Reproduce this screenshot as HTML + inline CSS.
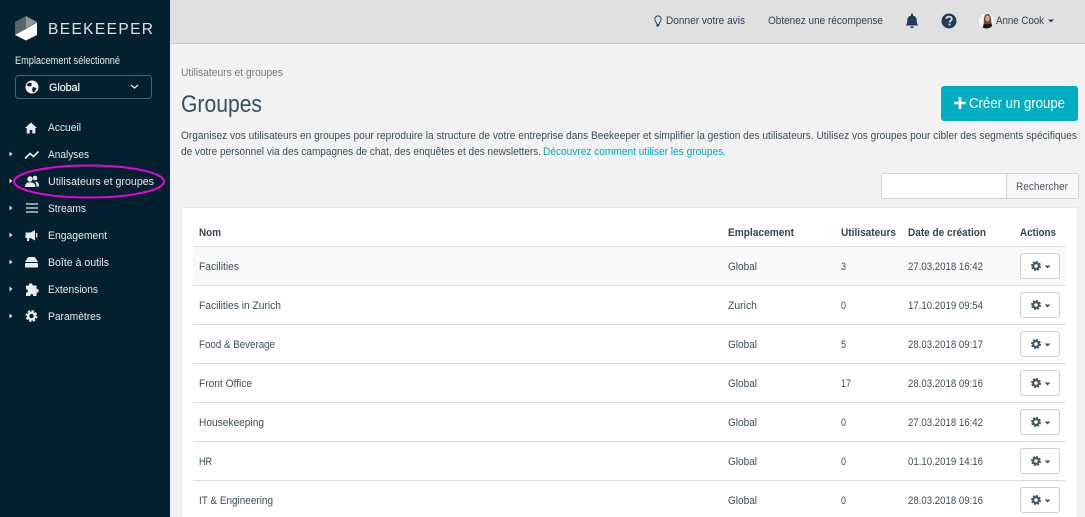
<!DOCTYPE html>
<html lang="fr"><head><meta charset="utf-8"><title>Groupes</title>
<style>
html,body{margin:0;padding:0;width:1085px;height:517px;overflow:hidden;background:#f2f2f2}
svg{display:block}
text{font-family:"Liberation Sans",sans-serif;font-size:11.2px;fill:#3c4f59;white-space:pre}
.s text{fill:#e8ecee}
.t text{fill:#2b4257}
.h text{font-weight:bold;fill:#34464f;font-size:11px}
</style></head><body>
<svg width="1085" height="517" viewBox="0 0 1085 517" xmlns="http://www.w3.org/2000/svg">
<defs>
<symbol id="gear" viewBox="0 0 14 14" overflow="visible">
<circle cx="7" cy="7" r="3.600" fill="none" stroke="currentColor" stroke-width="2.600"/>
<circle cx="7" cy="7" r="5.400" fill="none" stroke="currentColor" stroke-width="2" stroke-dasharray="2.600 1.640"/>
</symbol>
</defs>
<rect x="0" y="0" width="1085" height="517" fill="#f2f2f2"/>

<!-- top bar -->
<rect x="170" y="0" width="915" height="43" fill="#e0e0e0"/>
<rect x="170" y="43" width="915" height="1" fill="#cbcbcb"/>
<g class="t">
<path d="M657 24.500c0-2-2.200-3-2.200-5.400a3.200 3.200 0 0 1 6.400 0c0 2.400-2.200 3.400-2.200 5.400z" fill="none" stroke="#2b4257" stroke-width="1"/>
<rect x="656.500" y="25" width="2.500" height="1.500" fill="#2b4257"/>
<text x="666" y="24" textLength="79" lengthAdjust="spacingAndGlyphs">Donner votre avis</text>
<text x="768" y="24" textLength="115" lengthAdjust="spacingAndGlyphs">Obtenez une récompense</text>
<path d="M905.500 25.500c1.400-1.300 1.700-2.600 1.700-5 0-2.700 1.700-4.500 3.800-4.900v-1.100a1 1 0 0 1 2 0v1.100c2.100.4 3.800 2.200 3.800 4.900 0 2.400.3 3.700 1.700 5z" fill="#1f3b59"/>
<path d="M910.300 26.500h3.400a1.700 1.700 0 0 1-3.400 0z" fill="#1f3b59"/>
<circle cx="949" cy="21" r="7.500" fill="#1f3b59"/>
<path d="M946.300 18.800c.3-1.500 1.400-2.200 2.800-2.200 1.600 0 2.700 1 2.700 2.300 0 2-2.300 1.900-2.300 3.500" fill="none" stroke="#e0e0e0" stroke-width="1.800"/>
<rect x="948.500" y="23.600" width="1.900" height="1.900" fill="#e0e0e0"/>
<clipPath id="av"><circle cx="986.500" cy="21" r="7.500"/></clipPath>
<g clip-path="url(#av)">
<rect x="979" y="13" width="16" height="16" fill="#fbf9f7"/>
<path d="M982 29c1.500-3 1.800-5 1.800-9 0-3.500 1.500-6 3.700-6 2.300 0 3.500 2.500 3.700 6 .1 3 .8 6 3.800 9z" fill="#6a4a35"/>
<ellipse cx="987.500" cy="18.500" rx="2.200" ry="3" fill="#d9a98c"/>
<path d="M982 29l2-5h7l3 5z" fill="#1c1a1b"/>
</g>
<text x="996" y="24" textLength="48" lengthAdjust="spacingAndGlyphs">Anne Cook</text>
<path d="M1048 19.500h6l-3 3z" fill="#2b4257"/>
</g>

<!-- sidebar -->
<rect x="0" y="0" width="170" height="517" fill="#03202f"/>
<path d="M15 22l11-6v12.500l-11 6.500z" fill="#59656b"/>
<path d="M26 16l11 6-11 6.500z" fill="#8f9699"/>
<path d="M37 22.500v12.500l-11 5.500-11-5.500z" fill="#fdfdfd"/>
<g class="s">
<text x="48" y="34" style="font-size:15.500px;fill:#dfe3e5" textLength="105" lengthAdjust="spacing">BEEKEEPER</text>
<text x="15" y="64" textLength="105" lengthAdjust="spacingAndGlyphs">Emplacement sélectionné</text>
<rect x="15.500" y="75.500" width="136" height="23" rx="3" fill="none" stroke="#4b6170"/>
<circle cx="32" cy="87" r="6.500" fill="#f2f4f5"/>
<path d="M29 82.500l3 1-1 2.500-2.500.5-2-1.500zM33 87l3.500 1-1.500 3.500-2 1-1-3z" fill="#03202f"/>
<text x="49" y="91" style="stroke:#e8ecee;stroke-width:.25px" textLength="31" lengthAdjust="spacingAndGlyphs">Global</text>
<path d="M131 85l3.500 3 3.500-3" fill="none" stroke="#e8ecee" stroke-width="1.300"/>

<path d="M25 128l6-5.500 6 5.500h-1.700v5.500h-3v-3.500h-2.600v3.500h-3V128z" fill="#e8ecee"/>
<text x="48" y="131" textLength="33" lengthAdjust="spacingAndGlyphs">Accueil</text>
<path d="M9.500 151.500l3 2.500-3 2.500z" fill="#d8dcdf"/>
<path d="M25 158.500l5-5 3.500 3 5-5" fill="none" stroke="#e8ecee" stroke-width="1.600"/>
<text x="48" y="158" textLength="41" lengthAdjust="spacingAndGlyphs">Analyses</text>
<path d="M9.500 178.500l3 2.500-3 2.500z" fill="#d8dcdf"/>
<circle cx="35" cy="178" r="2.300" fill="#e8ecee"/>
<path d="M36 181.500c2 .3 3 2 3 5h-2.500c0-2-.5-3.700-1.500-4.500z" fill="#e8ecee"/>
<circle cx="30" cy="179" r="3" stroke="#03202f" stroke-width=".6" fill="#e8ecee"/>
<path d="M25 187c0-3.300 1.800-4.800 5-4.800s5.500 1.500 5.500 4.800z" fill="#e8ecee"/>
<text x="48" y="185" textLength="106" lengthAdjust="spacingAndGlyphs">Utilisateurs et groupes</text>
<path d="M9.500 205.500l3 2.500-3 2.500z" fill="#d8dcdf"/>
<path d="M26 204h12M26 208h12M26 212h12" stroke="#e8ecee" stroke-width="1.300"/>
<text x="48" y="212" textLength="38" lengthAdjust="spacingAndGlyphs">Streams</text>
<path d="M9.500 232.500l3 2.500-3 2.500z" fill="#d8dcdf"/>
<path d="M25.500 232.500h5l4.500-2.500v10.500l-4.500-2.500h-1l-.5 3h-2l.1-3h-1.600z" fill="#e8ecee"/><rect x="36" y="233" width="1.300" height="4.500" fill="#e8ecee"/>
<text x="48" y="239" textLength="59" lengthAdjust="spacingAndGlyphs">Engagement</text>
<path d="M9.500 259.500l3 2.500-3 2.500z" fill="#d8dcdf"/>
<path d="M25 262l2.500-4a2 2 0 0 1 1.700-1h4.600a2 2 0 0 1 1.700 1l2.500 4z" fill="#e8ecee"/><rect x="25" y="263" width="13" height="4.500" rx=".8" fill="#e8ecee"/>
<text x="48" y="266" textLength="61" lengthAdjust="spacingAndGlyphs">Boîte à outils</text>
<path d="M9.500 286.500l3 2.500-3 2.500z" fill="#d8dcdf"/>
<path d="M26 285.500h3c-1-3 4.500-3 3.500 0h4v3.500c3-1 3 4.500 0 3.500v3.500h-3.500c1-2.500-3.500-2.500-2.500 0H26v-3.500c2.500 1 2.500-4 0-3z" fill="#e8ecee"/>
<text x="48" y="293" textLength="50" lengthAdjust="spacingAndGlyphs">Extensions</text>
<path d="M9.500 313.500l3 2.500-3 2.500z" fill="#d8dcdf"/>
<use href="#gear" x="25" y="309.500" width="13" height="13" style="color:#e8ecee"/>
<text x="48" y="320" textLength="53" lengthAdjust="spacingAndGlyphs">Paramètres</text>
</g>
<ellipse cx="89" cy="181.500" rx="75" ry="16" fill="none" stroke="#ee00dc" stroke-width="2"/>

<!-- heading -->
<text x="181" y="76" style="fill:#7a7a7a" textLength="102" lengthAdjust="spacingAndGlyphs">Utilisateurs et groupes</text>
<text x="181" y="112" style="font-size:24px;fill:#34505f" textLength="81" lengthAdjust="spacingAndGlyphs">Groupes</text>
<text x="181" y="139" textLength="896" lengthAdjust="spacingAndGlyphs">Organisez vos utilisateurs en groupes pour reproduire la structure de votre entreprise dans Beekeeper et simplifier la gestion des utilisateurs. Utilisez vos groupes pour cibler des segments spécifiques</text>
<text x="181" y="155" textLength="360" lengthAdjust="spacingAndGlyphs">de votre personnel via des campagnes de chat, des enquêtes et des newsletters.</text>
<text x="543" y="155" style="fill:#00a8bf" textLength="183" lengthAdjust="spacingAndGlyphs">Découvrez comment utiliser les groupes.</text>

<rect x="941" y="86" width="137" height="35" rx="3" fill="#00aec4"/>
<path d="M954 103h12M960 97v12" stroke="#fff" stroke-width="2.600"/>
<text x="969" y="108" style="font-size:14.500px;fill:#fff" textLength="96" lengthAdjust="spacingAndGlyphs">Créer un groupe</text>

<!-- search -->
<rect x="881.500" y="173.500" width="197" height="25" rx="2" fill="#fff" stroke="#d2d2d2"/>
<rect x="1007" y="174" width="71" height="24" rx="1.500" fill="#f8f8f8"/>
<path d="M1006.500 174v24" stroke="#d2d2d2"/>
<text x="1016" y="190" style="fill:#4a5a63" textLength="52" lengthAdjust="spacingAndGlyphs">Rechercher</text>

<!-- panel -->
<rect x="181.500" y="207.500" width="896" height="330" fill="#fff" stroke="#e8e8e8"/>
<rect x="193" y="247" width="873" height="38" fill="#f9f9f9"/>
<path d="M193 246.500h873M193 285.500h873M193 324.500h873M193 363.500h873M193 402.500h873M193 441.500h873M193 480.500h873" stroke="#dedede"/>
<g class="h">
<text x="199" y="236" textLength="22" lengthAdjust="spacingAndGlyphs">Nom</text>
<text x="728" y="236" textLength="66" lengthAdjust="spacingAndGlyphs">Emplacement</text>
<text x="841" y="236" textLength="55" lengthAdjust="spacingAndGlyphs">Utilisateurs</text>
<text x="908" y="236" textLength="78" lengthAdjust="spacingAndGlyphs">Date de création</text>
<text x="1020" y="236" textLength="36" lengthAdjust="spacingAndGlyphs">Actions</text>
</g>

<text x="199" y="270" textLength="40" lengthAdjust="spacingAndGlyphs">Facilities</text>
<text x="728" y="270" textLength="29" lengthAdjust="spacingAndGlyphs">Global</text>
<text x="841" y="270" textLength="5" lengthAdjust="spacingAndGlyphs">3</text>
<text x="908" y="270" textLength="75" lengthAdjust="spacingAndGlyphs">27.03.2018 16:42</text>

<text x="199" y="309" textLength="82" lengthAdjust="spacingAndGlyphs">Facilities in Zurich</text>
<text x="728" y="309" textLength="29" lengthAdjust="spacingAndGlyphs">Zurich</text>
<text x="841" y="309" textLength="5" lengthAdjust="spacingAndGlyphs">0</text>
<text x="908" y="309" textLength="75" lengthAdjust="spacingAndGlyphs">17.10.2019 09:54</text>

<text x="199" y="348" textLength="76" lengthAdjust="spacingAndGlyphs">Food &amp; Beverage</text>
<text x="728" y="348" textLength="29" lengthAdjust="spacingAndGlyphs">Global</text>
<text x="841" y="348" textLength="5" lengthAdjust="spacingAndGlyphs">5</text>
<text x="908" y="348" textLength="75" lengthAdjust="spacingAndGlyphs">28.03.2018 09:17</text>

<text x="199" y="387" textLength="53" lengthAdjust="spacingAndGlyphs">Front Office</text>
<text x="728" y="387" textLength="29" lengthAdjust="spacingAndGlyphs">Global</text>
<text x="841" y="387" textLength="10" lengthAdjust="spacingAndGlyphs">17</text>
<text x="908" y="387" textLength="75" lengthAdjust="spacingAndGlyphs">28.03.2018 09:16</text>

<text x="199" y="426" textLength="65" lengthAdjust="spacingAndGlyphs">Housekeeping</text>
<text x="728" y="426" textLength="29" lengthAdjust="spacingAndGlyphs">Global</text>
<text x="841" y="426" textLength="5" lengthAdjust="spacingAndGlyphs">0</text>
<text x="908" y="426" textLength="75" lengthAdjust="spacingAndGlyphs">27.03.2018 16:42</text>

<text x="199" y="465" textLength="13" lengthAdjust="spacingAndGlyphs">HR</text>
<text x="728" y="465" textLength="29" lengthAdjust="spacingAndGlyphs">Global</text>
<text x="841" y="465" textLength="5" lengthAdjust="spacingAndGlyphs">0</text>
<text x="908" y="465" textLength="75" lengthAdjust="spacingAndGlyphs">01.10.2019 14:16</text>

<text x="199" y="504" textLength="74" lengthAdjust="spacingAndGlyphs">IT &amp; Engineering</text>
<text x="728" y="504" textLength="29" lengthAdjust="spacingAndGlyphs">Global</text>
<text x="841" y="504" textLength="5" lengthAdjust="spacingAndGlyphs">0</text>
<text x="908" y="504" textLength="75" lengthAdjust="spacingAndGlyphs">28.03.2018 09:16</text>

<!-- action buttons -->
<g fill="#fff" stroke="#cfcfcf">
<rect x="1020.500" y="253.500" width="39" height="25" rx="2.500"/>
<rect x="1020.500" y="292.500" width="39" height="25" rx="2.500"/>
<rect x="1020.500" y="331.500" width="39" height="25" rx="2.500"/>
<rect x="1020.500" y="370.500" width="39" height="25" rx="2.500"/>
<rect x="1020.500" y="409.500" width="39" height="25" rx="2.500"/>
<rect x="1020.500" y="448.500" width="39" height="25" rx="2.500"/>
<rect x="1020.500" y="487.500" width="39" height="25" rx="2.500"/>
</g>
<g style="color:#46555d">
<use href="#gear" x="1030.500" y="260.500" width="11" height="11"/>
<use href="#gear" x="1030.500" y="299.500" width="11" height="11"/>
<use href="#gear" x="1030.500" y="338.500" width="11" height="11"/>
<use href="#gear" x="1030.500" y="377.500" width="11" height="11"/>
<use href="#gear" x="1030.500" y="416.500" width="11" height="11"/>
<use href="#gear" x="1030.500" y="455.500" width="11" height="11"/>
<use href="#gear" x="1030.500" y="494.500" width="11" height="11"/>
</g>
<path d="M1044.500 265.500h6l-3 3zM1044.500 304.500h6l-3 3zM1044.500 343.500h6l-3 3zM1044.500 382.500h6l-3 3zM1044.500 421.500h6l-3 3zM1044.500 460.500h6l-3 3zM1044.500 499.500h6l-3 3z" fill="#46555d"/>
</svg>
</body></html>
